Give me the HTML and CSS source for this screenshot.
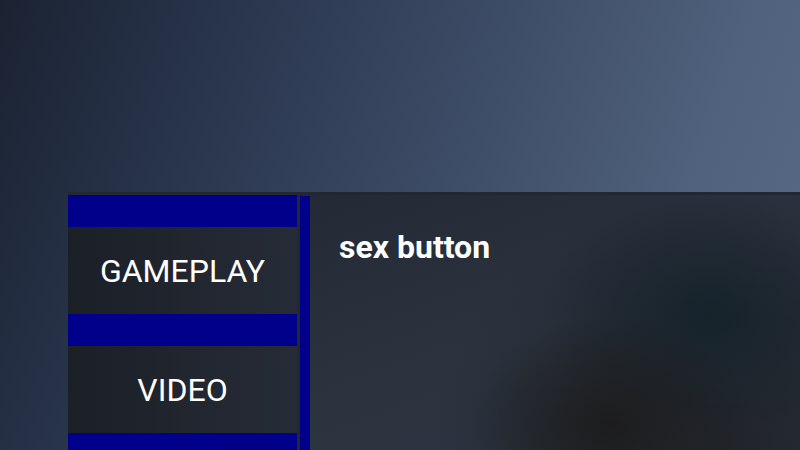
FILE: index.html
```html
<!DOCTYPE html>
<html>
<head>
<meta charset="utf-8">
<link rel="stylesheet" href="styles.css">
</head>
<body>
<div class="page">
  <div class="hero"></div>
  <div class="panel">
    <nav class="sidebar">
      <div class="item">GAMEPLAY</div>
      <div class="item">VIDEO</div>
      <div class="item"></div>
    </nav>
    <div class="divider"></div>
    <main class="content">
      <h1 class="title">sex button</h1>
    </main>
  </div>
</div>
</body>
</html>
```
FILE: styles.css
```css
html, body {
  margin: 0;
  padding: 0;
  width: 800px;
  height: 450px;
  overflow: hidden;
}
body {
  font-family: Roboto, "Liberation Sans", sans-serif;
  background: linear-gradient(110deg, #1b2332 0%, #2b3850 28%, #3f4e68 55%, #4f617c 78%, #5a6b86 100%);
}
.page {
  display: flex;
  flex-direction: column;
  height: 450px;
}
.hero {
  height: 192px;
  flex: none;
}
.panel {
  flex: 1;
  margin-left: 68px;
  display: flex;
  padding-top: 3px;
  background: #222833;
  overflow: hidden;
}
.sidebar {
  width: 229px;
  flex: none;
  display: flex;
  flex-direction: column;
}
.item {
  flex: none;
  height: 87px;
  border-top: 32px solid #00008a;
  background: linear-gradient(90deg, #1b1f26 0%, #262c37 100%);
  color: #ffffff;
  font-size: 32px;
  display: flex;
  align-items: center;
  justify-content: center;
}
.divider {
  width: 10px;
  flex: none;
  margin-left: 3px;
  margin-top: 1px;
  background: #00008a;
}
.content {
  flex: 1;
  padding: 33px 29px 0;
  background:
    radial-gradient(ellipse 140px 110px at 300px 230px, rgba(28,28,28,0.95), rgba(28,28,28,0) 100%),
    radial-gradient(ellipse 170px 120px at 400px 120px, rgba(20,34,42,0.9), rgba(20,34,42,0) 100%),
    radial-gradient(ellipse 300px 260px at 420px 250px, rgba(30,32,36,0.8), rgba(30,32,36,0) 100%),
    linear-gradient(160deg, #232a35 0%, #2b333f 50%, #2d3542 100%);
}
.title {
  margin: 0;
  color: #ffffff;
  font-size: 32px;
  font-weight: 700;
}
```
